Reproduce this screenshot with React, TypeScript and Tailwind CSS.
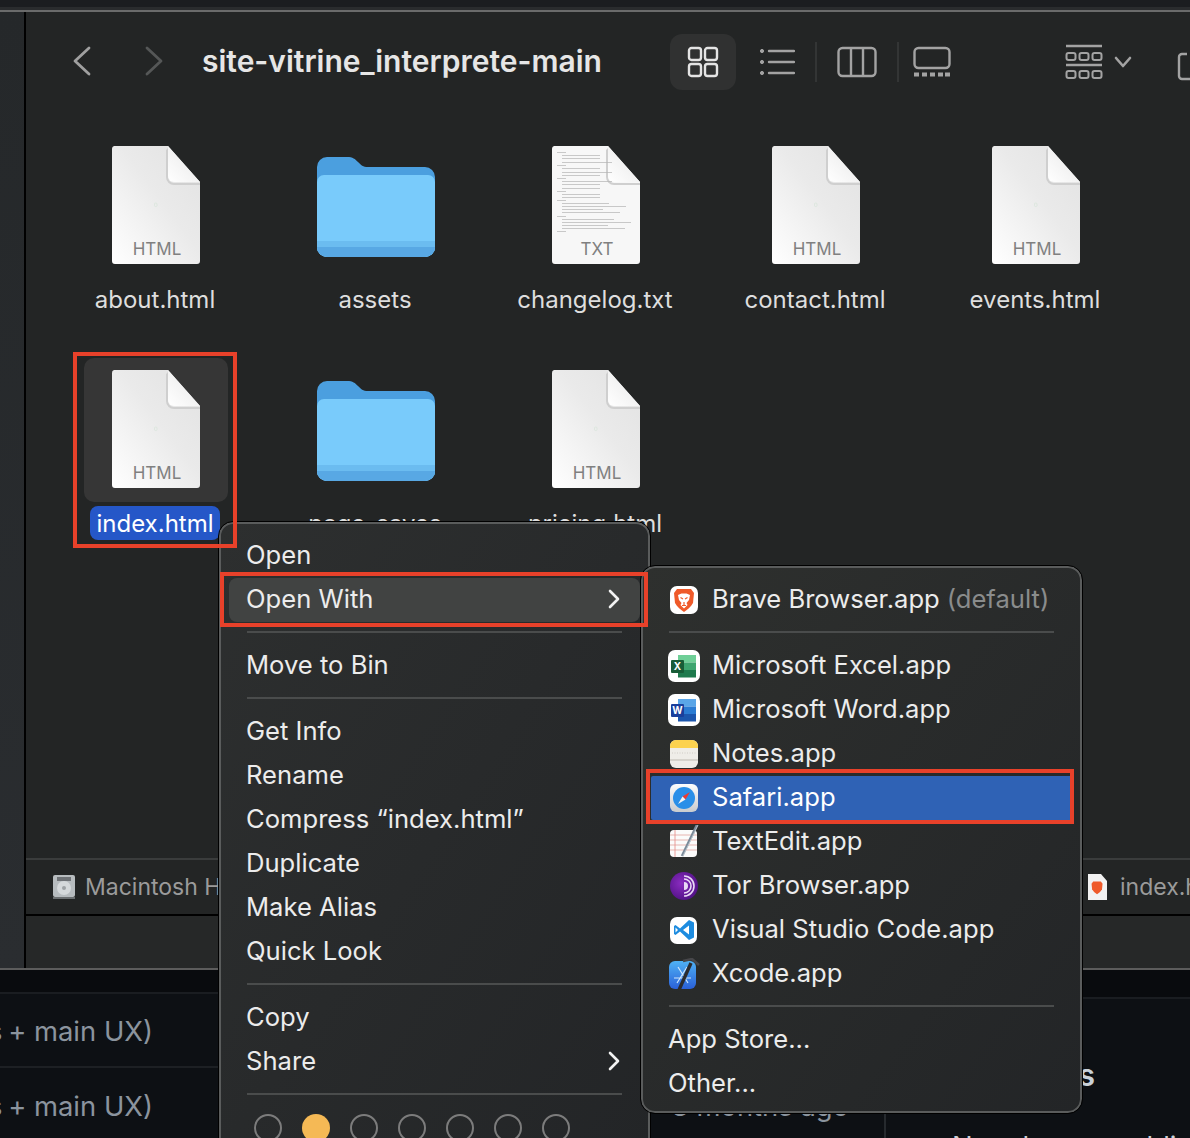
const sans = "font-['Inter','Liberation_Sans',sans-serif]";

function DocIcon({ kind }: { kind: string }) {
  const wide = kind === "TXT";
  return (
    <div className="relative mb-[2px] h-[118px] w-[90px]">
      <svg width="90" height="118" viewBox="0 0 90 118" className="absolute inset-0">
        <defs>
          <linearGradient id={"page" + kind} x1="1" y1="0" x2="0" y2="1">
            <stop offset="0" stopColor="#e2e2e2" />
            <stop offset="0.45" stopColor="#eaeaea" />
            <stop offset="1" stopColor="#ffffff" />
          </linearGradient>
          <linearGradient id={"fold" + kind} x1="0" y1="1" x2="1" y2="0">
            <stop offset="0" stopColor="#ffffff" />
            <stop offset="1" stopColor="#e6e6e6" />
          </linearGradient>
        </defs>
        <path d="M3 0H57L89 36V115a3 3 0 0 1-3 3H4a3 3 0 0 1-3-3V3a3 3 0 0 1 2-3z" fill={wide ? "#f7f7f7" : `url(#page${kind})`} />
        <path d="M55 4V31a8 8 0 0 0 8 8H89V37H63a6 6 0 0 1-6-6V2z" fill="#cfcfcf" />
        <path d="M57 0L89 36H63a6 6 0 0 1-6-6z" fill={`url(#fold${kind})`} />
        {wide ? (
          <g fill="#b4b4b4">
            {[6, 9, 12, 16, 19, 22, 26, 29, 32, 35, 38, 42, 45, 48, 51].map((y, i) => (
              <rect key={y} x={i % 4 === 0 ? 6 : 11} y={y} width={i % 4 === 0 ? 9 : i % 3 ? 38 : 50} height="0.7" />
            ))}
            {[54, 57, 60, 63, 66, 70, 73, 76, 79, 82, 85].map((y, i) => (
              <rect key={y} x={i % 5 === 0 ? 6 : 11} y={y} width={i % 5 === 0 ? 9 : 30 + ((i * 17) % 40)} height="0.7" />
            ))}
          </g>
        ) : (
          <rect x="43.5" y="57" width="2.5" height="3.5" rx="1" fill="none" stroke="#cfe0d2" strokeWidth="0.5" />
        )}
      </svg>
      <div className={`absolute inset-x-0 top-[93px] pl-[2px] text-center text-[17px] leading-5 text-[#808080] ${sans}`}>{kind}</div>
    </div>
  );
}

function FolderIcon() {
  return (
    <svg className="mt-[2px]" width="118" height="100" viewBox="0 0 118 100">
      <path d="M0 10a10 10 0 0 1 10-10H30c6 0 8 2 11 5s5 5 10 5H108a10 10 0 0 1 10 10V90a10 10 0 0 1-10 10H10A10 10 0 0 1 0 90z" fill="#4b9fdf" />
      <path d="M0 25a7 7 0 0 1 7-7H111a7 7 0 0 1 7 7V90a10 10 0 0 1-10 10H10A10 10 0 0 1 0 90z" fill="#79cbfb" />
      <path d="M0 84H118V90a10 10 0 0 1-10 10H10A10 10 0 0 1 0 90z" fill="#6bbcf0" />
      <path d="M0 90H118a10 10 0 0 1-10 10H10a10 10 0 0 1-10-10z" fill="#58a8e4" />
    </svg>
  );
}

function Cell({ name, folder, kind, selected }: { name: string; folder?: boolean; kind?: string; selected?: boolean }) {
  return (
    <div className="flex h-[224px] w-[220px] flex-col items-center">
      <div className={`ml-[2px] flex h-[144px] w-[144px] items-center justify-center rounded-[10px] ${selected ? "bg-[#363636]" : ""}`}>
        {folder ? <FolderIcon /> : <DocIcon kind={kind ?? "HTML"} />}
      </div>
      <div className={`mt-1 flex h-[34px] items-center rounded-[8px] px-[6px] pt-[2px] text-[24px] ${selected ? "bg-[#2557c8] text-white" : "text-[#dedede]"} ${sans}`}>
        {name}
      </div>
    </div>
  );
}

function ToolbarIcons() {
  const c = "#a3a3a3";
  return (
    <div className="ml-auto mr-[-11px] flex items-center">
      <div className="flex h-[56px] w-[66px] items-center justify-center rounded-[12px] bg-[#303131]">
        <svg width="32" height="32" viewBox="0 0 32 32" fill="none" stroke="#e4e4e4" strokeWidth="2.4">
          <rect x="2" y="2" width="12" height="12" rx="2.5" />
          <rect x="18" y="2" width="12" height="12" rx="2.5" />
          <rect x="2" y="18" width="12" height="12" rx="2.5" />
          <rect x="18" y="18" width="12" height="12" rx="2.5" />
        </svg>
      </div>
      <svg className="ml-[23px]" width="36" height="30" viewBox="0 0 36 30" fill={c} stroke={c}>
        <circle cx="3" cy="4" r="1.6" />
        <circle cx="3" cy="15" r="1.6" />
        <circle cx="3" cy="26" r="1.6" />
        <path d="M10 4H35M10 15H35M10 26H35" strokeWidth="2.4" strokeLinecap="round" />
      </svg>
      <div className="ml-[20px] h-[40px] w-[2px] bg-[#333535]" />
      <svg className="ml-[20px]" width="40" height="32" viewBox="0 0 40 32" fill="none" stroke={c} strokeWidth="2.4">
        <rect x="1.5" y="2" width="37" height="28" rx="4" />
        <path d="M14 2V30M26 2V30" />
      </svg>
      <div className="ml-[20px] h-[40px] w-[2px] bg-[#333535]" />
      <svg className="ml-[13px]" width="40" height="32" viewBox="0 0 40 32" fill="none" stroke={c}>
        <rect x="2.5" y="2" width="35" height="20" rx="4" strokeWidth="2.4" />
        <path d="M2 28.5h5M10 28.5h5M18 28.5h5M26 28.5h5M33 28.5h5" strokeWidth="4" />
      </svg>
      <svg className="ml-[113px]" width="38" height="36" viewBox="0 0 38 36" fill="none" stroke={c} strokeWidth="2">
        <path d="M1 2H37M1 21H37" strokeWidth="2.4" />
        <rect x="1.5" y="9" width="9" height="7" rx="2" />
        <rect x="14.5" y="9" width="9" height="7" rx="2" />
        <rect x="27.5" y="9" width="9" height="7" rx="2" />
        <rect x="1.5" y="27" width="9" height="7" rx="2" />
        <rect x="14.5" y="27" width="9" height="7" rx="2" />
        <rect x="27.5" y="27" width="9" height="7" rx="2" />
      </svg>
      <svg className="ml-[11px]" width="18" height="14" viewBox="0 0 18 14" fill="none" stroke={c} strokeWidth="2.6" strokeLinecap="round" strokeLinejoin="round">
        <path d="M2 3l7 8 7-8" />
      </svg>
      <svg className="ml-[45px] shrink-0" width="24" height="40" viewBox="0 0 24 40" fill="none" stroke={c} strokeWidth="2.4">
        <path d="M10 12H5a3 3 0 0 0-3 3V34a3 3 0 0 0 3 3H24M14 2L24 -6" />
      </svg>
    </div>
  );
}

function Separator() {
  return (
    <div className="flex h-[22px] items-center px-[26px] pb-[2px]">
      <div className="h-[2px] w-full bg-[#4a4c4c]" />
    </div>
  );
}

function Chevron() {
  return (
    <svg className="ml-auto" width="14" height="20" viewBox="0 0 14 20" fill="none" stroke="#f2f2f2" strokeWidth="2.6" strokeLinecap="round" strokeLinejoin="round">
      <path d="M3 2l8 8-8 8" />
    </svg>
  );
}

function MenuRow({ label, arrow, active }: { label: string; arrow?: boolean; active?: boolean }) {
  return (
    <div className={`mx-[8px] flex h-[44px] items-center rounded-[8px] pb-[2px] pl-[17px] pr-[19px] text-[25.6px] ${active ? "bg-[#414342]" : ""}`}>
      <span>{label}</span>
      {arrow && <Chevron />}
    </div>
  );
}

function ContextMenu() {
  return (
    <div className={`absolute left-[219px] top-[522px] h-[640px] w-[431px] rounded-[14px] border-2 border-[#5a5c5c] bg-gradient-to-br from-[#2d2f2f] to-[#232527] pt-[10px] text-[#ececec] outline outline-1 outline-black ${sans}`}>
      <MenuRow label="Open" />
      <MenuRow label="Open With" arrow active />
      <Separator />
      <MenuRow label="Move to Bin" />
      <Separator />
      <MenuRow label="Get Info" />
      <MenuRow label="Rename" />
      <MenuRow label="Compress “index.html”" />
      <MenuRow label="Duplicate" />
      <MenuRow label="Make Alias" />
      <MenuRow label="Quick Look" />
      <Separator />
      <MenuRow label="Copy" />
      <MenuRow label="Share" arrow />
      <Separator />
      <div className="mt-[8px] flex gap-[20px] pl-[33px]">
        {[0, 1, 2, 3, 4, 5, 6].map((i) => (
          <div key={i} className={i === 1 ? "h-[28px] w-[28px] rounded-full bg-[#f5b955]" : "h-[28px] w-[28px] rounded-full border-2 border-[#7c7c7c]"} />
        ))}
      </div>
    </div>
  );
}

function AppTile({ children, size = "h-[32px] w-[32px]" }: { children: React.ReactNode; size?: string }) {
  return <div className={`flex shrink-0 items-center justify-center overflow-hidden rounded-[7px] bg-white ${size}`}>{children}</div>;
}

function BraveIcon({ size = 24 }: { size?: number }) {
  return (
    <svg width={size} height={size} viewBox="0 0 22 24">
      <path d="M4 1H18L21 5L20 15C18 19 14 22 11 24C8 22 4 19 2 15L1 5z" fill="#ef5a2a" />
      <path d="M5 7L8.500 5.500H13.500L17 7L16 12L13.500 15L14.500 17L11 20.500L7.500 17L8.500 15L6 12z" fill="#fff" />
      <path d="M7.500 9.500L10 11M14.500 9.500L12 11M11 14V17M9 17.500H13" stroke="#ef5a2a" strokeWidth="1.200" fill="none" />
    </svg>
  );
}

function OfficeIcon({ letter, shades, box }: { letter: string; shades: string[]; box: string }) {
  return (
    <svg width="26" height="24" viewBox="0 0 26 24">
      <rect x="7" y="1" width="18" height="7.500" fill={shades[0]} />
      <rect x="7" y="8.500" width="18" height="7.500" fill={shades[1]} />
      <rect x="7" y="16" width="18" height="7.500" fill={shades[2]} />
      <rect x="0" y="6" width="13" height="13" rx="1" fill={box} />
      <text x="6.500" y="16" textAnchor="middle" fontSize="10" fontWeight="700" fill="#fff" fontFamily="Inter">{letter}</text>
    </svg>
  );
}

function NotesIcon() {
  return (
    <svg width="30" height="30" viewBox="0 0 30 30">
      <rect x="1" y="1" width="28" height="28" rx="6" fill="#efede8" />
      <path d="M1 9V7a6 6 0 0 1 6-6H23a6 6 0 0 1 6 6V9z" fill="#fcd24f" />
      <path d="M1 21H29" stroke="#bdb9b0" strokeWidth="1" />
      <path d="M3 14H27" stroke="#cfccc5" strokeWidth="1" strokeDasharray="1 1.500" />
    </svg>
  );
}

function SafariIcon() {
  return (
    <svg width="30" height="30" viewBox="0 0 30 30">
      <defs>
        <linearGradient id="safariTile" x1="0" y1="0" x2="0" y2="1">
          <stop offset="0" stopColor="#fdfdfd" />
          <stop offset="1" stopColor="#c9cbce" />
        </linearGradient>
      </defs>
      <rect x="1" y="1" width="28" height="28" rx="6" fill="url(#safariTile)" />
      <circle cx="15" cy="15" r="11" fill="#2a8fe8" />
      <path d="M21 9L13.500 13.500L16.500 16.500z" fill="#ee3b30" />
      <path d="M9 21L13.500 13.500L16.500 16.500z" fill="#f4f4f4" />
    </svg>
  );
}

function TextEditIcon() {
  return (
    <svg width="32" height="34" viewBox="0 0 32 34">
      <rect x="2" y="5" width="27" height="27" rx="4" fill="#fbfbfb" />
      <path d="M2 10H29M2 15H29M2 20H29M2 25H29" stroke="#e3a5a0" strokeWidth="0.800" />
      <path d="M7 5V32" stroke="#e98c86" strokeWidth="0.800" />
      <path d="M29 0L14 31" stroke="#7b8a99" strokeWidth="2.600" />
      <path d="M30 0L15 31" stroke="#c8d0d8" strokeWidth="0.800" />
    </svg>
  );
}

function TorIcon() {
  return (
    <svg width="30" height="30" viewBox="0 0 30 30" fill="none">
      <defs>
        <radialGradient id="torBall" cx="0.4" cy="0.4" r="0.7">
          <stop offset="0" stopColor="#8a2cc0" />
          <stop offset="1" stopColor="#4c0f80" />
        </radialGradient>
      </defs>
      <circle cx="15" cy="15" r="14" fill="url(#torBall)" />
      <path d="M15 11a4 4 0 0 1 0 8z" fill="#e9d9f5" />
      <path d="M15 8a7 7 0 0 1 0 14M15 5a10 10 0 0 1 0 20" stroke="#e9d9f5" strokeWidth="1.600" />
    </svg>
  );
}

function VsCodeIcon() {
  return (
    <svg width="22" height="22" viewBox="0 0 22 22">
      <path d="M16 1L21 3.500V18.500L16 21L7 12.500L2.500 16L1 15V7L2.500 6L7 9.500z" fill="#1d8ce0" />
      <path d="M16 6.500L10 11L16 15.500z" fill="#fff" />
      <path d="M2.500 8.500L5 11L2.500 13.500z" fill="#fff" />
    </svg>
  );
}

function XcodeIcon() {
  return (
    <svg width="32" height="32" viewBox="0 0 32 32" fill="none">
      <defs>
        <linearGradient id="xcodeTile" x1="0" y1="0" x2="0" y2="1">
          <stop offset="0" stopColor="#4fb2f5" />
          <stop offset="1" stopColor="#2a60d8" />
        </linearGradient>
      </defs>
      <rect x="1" y="3" width="27" height="28" rx="6" fill="url(#xcodeTile)" />
      <path d="M10 9L20 25M19 9L9 25M6 20H23" stroke="#cfe6fb" strokeWidth="1.200" />
      <path d="M23 5L11 32" stroke="#2b2b2e" strokeWidth="3.400" />
      <path d="M15 3L24 1L31 7" stroke="#47474a" strokeWidth="2.600" />
    </svg>
  );
}

function AppRow({ icon, label, suffix, active }: { icon: React.ReactNode; label: string; suffix?: string; active?: boolean }) {
  return (
    <div className={`mx-[8px] flex h-[44px] items-center gap-[12px] pl-[16px] text-[25.6px] ${active ? "rounded-[2px] bg-[#2f62b5] text-white" : ""}`}>
      <div className="flex w-[33px] shrink-0 items-center justify-center">{icon}</div>
      <span className="-mt-[2px]">{label}</span>
      {suffix && <span className="-ml-[5px] -mt-[2px] text-[#8a8c8c]">{suffix}</span>}
    </div>
  );
}

function OpenWithMenu() {
  return (
    <div className={`absolute left-[641px] top-[566px] h-[547px] w-[441px] rounded-[14px] border-2 border-[#5a5c5c] bg-gradient-to-br from-[#2e302e] to-[#232527] pt-[10px] text-[#ececec] outline outline-1 outline-black ${sans}`}>
      <AppRow label="Brave Browser.app" suffix="(default)" icon={<AppTile size="h-[28px] w-[28px]"><BraveIcon /></AppTile>} />
      <Separator />
      <AppRow label="Microsoft Excel.app" icon={<AppTile><OfficeIcon letter="X" shades={["#6fcf97", "#3ea56f", "#1f7a4d"]} box="#185c37" /></AppTile>} />
      <AppRow label="Microsoft Word.app" icon={<AppTile><OfficeIcon letter="W" shades={["#5aa6e8", "#2b7cd3", "#1c56ad"]} box="#1a3f9c" /></AppTile>} />
      <AppRow label="Notes.app" icon={<NotesIcon />} />
      <AppRow label="Safari.app" icon={<SafariIcon />} active />
      <AppRow label="TextEdit.app" icon={<TextEditIcon />} />
      <AppRow label="Tor Browser.app" icon={<TorIcon />} />
      <AppRow label="Visual Studio Code.app" icon={<AppTile size="h-[27px] w-[27px]"><VsCodeIcon /></AppTile>} />
      <AppRow label="Xcode.app" icon={<XcodeIcon />} />
      <Separator />
      <div className="mx-[8px] flex h-[44px] items-center pb-[2px] pl-[17px] text-[25.6px]">App Store...</div>
      <div className="mx-[8px] flex h-[44px] items-center pb-[2px] pl-[17px] text-[25.6px]">Other...</div>
    </div>
  );
}

function Redbox({ className }: { className: string }) {
  return <div className={`pointer-events-none absolute border-[4px] border-[#e8412a] ${className}`} />;
}

function DiskIcon() {
  return (
    <svg width="24" height="26" viewBox="0 0 24 26">
      <rect x="1" y="1" width="22" height="22" rx="2" fill="#b7bcbf" />
      <rect x="5" y="3" width="14" height="4" fill="#6e7276" />
      <circle cx="12" cy="14" r="7" fill="#d5d9db" />
      <circle cx="12" cy="14" r="2" fill="#9da2a5" />
      <rect x="1" y="23" width="22" height="2" fill="#6a6e70" />
    </svg>
  );
}

export default function App() {
  const files = [
    { name: "about.html" },
    { name: "assets", folder: true },
    { name: "changelog.txt", kind: "TXT" },
    { name: "contact.html" },
    { name: "events.html" },
    { name: "index.html", selected: true },
    { name: "page_saves", folder: true },
    { name: "pricing.html" },
  ];

  return (
    <div className={`relative h-[1138px] w-[1190px] overflow-hidden bg-[#0d1014] ${sans}`}>
      <div className="h-[7px] bg-[#1b1d20]" />
      <div className="h-[3px] bg-[#2a2c2e]" />
      <div className="h-[2px] bg-[#6a6b6b]" />

      {/* finder window */}
      <div className="flex h-[956px] overflow-hidden">
        <div className="w-[26px] shrink-0 border-r-2 border-black bg-gradient-to-b from-[#25282a] to-[#2a2d30]" />
        <div className="flex min-w-0 flex-1 flex-col bg-[#232525]">
          <div className="flex h-[98px] items-start pt-[22px]">
            <svg className="ml-[46px] mt-[11px]" width="20" height="32" viewBox="0 0 20 32" fill="none" stroke="#a0a0a0" strokeWidth="2.800" strokeLinecap="round" strokeLinejoin="round">
              <path d="M17 3L3 16L17 29" />
            </svg>
            <svg className="ml-[52px] mt-[11px]" width="20" height="32" viewBox="0 0 20 32" fill="none" stroke="#555757" strokeWidth="2.800" strokeLinecap="round" strokeLinejoin="round">
              <path d="M3 3L17 16L3 29" />
            </svg>
            <div className="ml-[38px] mt-[9px] whitespace-nowrap text-[30px] font-semibold leading-9 text-[#e6e6e6]">site-vitrine_interprete-main</div>
            <ToolbarIcons />
          </div>

          <div className="flex flex-1 flex-wrap content-start pl-[19px] pt-[24px]">
            {files.map((f) => (
              <Cell key={f.name} {...f} />
            ))}
          </div>

          <div className="flex h-[56px] shrink-0 items-center border-t-2 border-[#3a3c3c] text-[23px] text-[#9b9b9b]">
            <div className="ml-[26px]"><DiskIcon /></div>
            <span className="ml-[9px] whitespace-nowrap">Macintosh HD</span>
            <div className="ml-auto flex w-[103px] items-center gap-[13px] overflow-hidden">
              <svg className="shrink-0" width="20" height="26" viewBox="0 0 20 26">
                <path d="M1 0H14L20 7V26H1z" fill="#f2f2f2" />
                <g transform="translate(4 7) scale(0.55)"><path d="M4 1H18L21 5L20 15C18 19 14 22 11 24C8 22 4 19 2 15L1 5z" fill="#ef5a2a" /></g>
              </svg>
              <span className="whitespace-nowrap">index.html</span>
            </div>
          </div>
          <div className="h-[54px] shrink-0 border-t-2 border-black bg-[#262828]" />
        </div>
      </div>
      <div className="h-[2px] bg-[#5c5c5c]" />

      {/* repo page behind the window */}
      <div className="flex h-[168px]">
        <div className="w-[886px] border-r-2 border-[#262a2e]">
          <div className="h-[24px] border-b-2 border-[#1a1d21] bg-[#090b0e]" />
          <div className="flex h-[74px] items-center overflow-hidden border-b-2 border-[#1d2024] pt-[4px] text-[27.4px] text-[#8b949e]">
            <span className="-ml-[12px] whitespace-nowrap"><span className="-mr-[2px]">s</span> + main UX)</span>
          </div>
          <div className="flex h-[74px] items-center justify-between overflow-hidden pr-[35px] pt-[4px] text-[27.4px] text-[#8b949e]">
            <span className="-ml-[12px] whitespace-nowrap"><span className="-mr-[2px]">s</span> + main UX)</span>
            <span className="whitespace-nowrap">3 months ago</span>
          </div>
        </div>
        <div className="min-w-0 flex-1 overflow-hidden">
          <div className="h-[29px] border-b-2 border-[#1a1d21] bg-[#090b0e]" />
          <div className="ml-[-101px] mt-[58px] w-[310px] text-right text-[30px] font-semibold leading-9 text-[#c9d1d9]">Releases</div>
          <div className="ml-[66px] mt-[35px] whitespace-nowrap text-[27.4px] leading-9 text-[#c9d1d9]">No releases published</div>
        </div>
      </div>

      <ContextMenu />
      <OpenWithMenu />

      <Redbox className="left-[73px] top-[352px] h-[196px] w-[164px]" />
      <Redbox className="left-[220px] top-[572px] h-[55px] w-[428px]" />
      <Redbox className="left-[646px] top-[769px] h-[55px] w-[428px]" />
    </div>
  );
}
